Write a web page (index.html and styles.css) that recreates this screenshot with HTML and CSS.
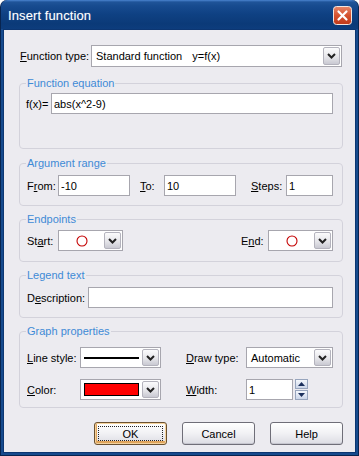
FILE: index.html
```html
<!DOCTYPE html>
<html lang="en">
<head>
<meta charset="UTF-8">
<title>Insert function</title>
<link rel="stylesheet" href="styles.css">
</head>
<body>
<div class="window">
  <div class="titlebar">
    <span class="title">Insert function</span>
    <span class="close">
      <svg width="19" height="19" viewBox="0 0 19 19"><defs><linearGradient id="cg" x1="0" y1="0" x2="0" y2="1"><stop offset="0" stop-color="#e8876a"/><stop offset="0.5" stop-color="#d5522f"/><stop offset="1" stop-color="#c0391a"/></linearGradient></defs><rect x="0.5" y="0.5" width="18" height="18" rx="3" fill="url(#cg)" stroke="#f3e6e0"/><path d="M5.5 5.5 L13.5 13.5 M13.5 5.5 L5.5 13.5" stroke="#fff" stroke-width="2.2" stroke-linecap="round"/></svg>
    </span>
  </div>
  <div class="client">
    <div class="row top-row">
      <span class="lbl lbl-type"><u>F</u>unction type:</span>
      <div class="combo combo-type">
        <div class="combo-val">Standard function<span class="sub">y=f(x)</span></div>
        <div class="combo-btn"><svg width="9" height="6" viewBox="0 0 9 6"><path d="M1 1 L4.5 4.5 L8 1" stroke="#222" stroke-width="2" fill="none"/></svg></div>
      </div>
    </div>

    <fieldset class="group g1">
      <legend>Function equation</legend>
      <div class="row">
        <span class="lbl lbl-fx">f(x)=</span>
        <input class="field grow" type="text" value="abs(x^2-9)">
      </div>
    </fieldset>

    <fieldset class="group g2">
      <legend>Argument range</legend>
      <div class="row">
        <span class="lbl lbl-from">F<u>r</u>om:</span>
        <input class="field w72" type="text" value="-10">
        <span class="lbl lbl-to"><u>T</u>o:</span>
        <input class="field w72" type="text" value="10">
        <span class="lbl lbl-steps"><u>S</u>teps:</span>
        <input class="field grow" type="text" value="1">
      </div>
    </fieldset>

    <fieldset class="group g3">
      <legend>Endpoints</legend>
      <div class="row">
        <span class="lbl lbl-from">St<u>a</u>rt:</span>
        <div class="combo combo-end">
          <div class="combo-val center"><svg width="12" height="12" viewBox="0 0 12 12"><circle cx="6" cy="6" r="5" fill="none" stroke="#c40000" stroke-width="1.1"/></svg></div>
          <div class="combo-btn"><svg width="9" height="6" viewBox="0 0 9 6"><path d="M1 1 L4.5 4.5 L8 1" stroke="#222" stroke-width="2" fill="none"/></svg></div>
        </div>
        <span class="lbl lbl-end">E<u>n</u>d:</span>
        <div class="combo combo-end">
          <div class="combo-val center"><svg width="12" height="12" viewBox="0 0 12 12"><circle cx="6" cy="6" r="5" fill="none" stroke="#c40000" stroke-width="1.1"/></svg></div>
          <div class="combo-btn"><svg width="9" height="6" viewBox="0 0 9 6"><path d="M1 1 L4.5 4.5 L8 1" stroke="#222" stroke-width="2" fill="none"/></svg></div>
        </div>
      </div>
    </fieldset>

    <fieldset class="group g4">
      <legend>Legend text</legend>
      <div class="row">
        <span class="lbl lbl-desc">D<u>e</u>scription:</span>
        <input class="field grow" type="text" value="">
      </div>
    </fieldset>

    <fieldset class="group g5">
      <legend>Graph properties</legend>
      <div class="row">
        <span class="lbl lbl-prop"><u>L</u>ine style:</span>
        <div class="combo combo-prop">
          <div class="combo-val pad"><div class="line-sample"></div></div>
          <div class="combo-btn"><svg width="9" height="6" viewBox="0 0 9 6"><path d="M1 1 L4.5 4.5 L8 1" stroke="#222" stroke-width="2" fill="none"/></svg></div>
        </div>
        <span class="lbl lbl-prop2"><u>D</u>raw type:</span>
        <div class="combo grow">
          <div class="combo-val">Automatic</div>
          <div class="combo-btn"><svg width="9" height="6" viewBox="0 0 9 6"><path d="M1 1 L4.5 4.5 L8 1" stroke="#222" stroke-width="2" fill="none"/></svg></div>
        </div>
      </div>
      <div class="row row-gap">
        <span class="lbl lbl-prop"><u>C</u>olor:</span>
        <div class="combo combo-prop">
          <div class="combo-val pad"><div class="color-sample"></div></div>
          <div class="combo-btn"><svg width="9" height="6" viewBox="0 0 9 6"><path d="M1 1 L4.5 4.5 L8 1" stroke="#222" stroke-width="2" fill="none"/></svg></div>
        </div>
        <span class="lbl lbl-prop2"><u>W</u>idth:</span>
        <input class="field w47" type="text" value="1">
        <div class="spin">
          <div class="spin-btn"><svg width="7" height="4" viewBox="0 0 7 4"><path d="M0 4 L3.5 0 L7 4 Z" fill="#1b2f5c"/></svg></div>
          <div class="spin-btn"><svg width="7" height="4" viewBox="0 0 7 4"><path d="M0 0 L3.5 4 L7 0 Z" fill="#1b2f5c"/></svg></div>
        </div>
      </div>
    </fieldset>

    <div class="buttons">
      <div class="btn default"><span class="focus">OK</span></div>
      <div class="btn">Cancel</div>
      <div class="btn">Help</div>
    </div>
  </div>
</div>
</body>
</html>
```

FILE: styles.css
```css
body{margin:0;background:#fff;font-family:"Liberation Sans",Arial,sans-serif;font-size:11px;color:#000}
.window{width:359px;height:456px;box-sizing:border-box;background:#164a8d;border:1px solid #08244f;border-top:none;border-radius:7px 7px 0 0;padding:0 2px 2px;overflow:hidden}
.titlebar{height:29px;margin:0 -2px;display:flex;align-items:center;justify-content:space-between;padding:0 6px 0 7px;border-radius:7px 7px 0 0;background:linear-gradient(#4a84cf 0,#1f5499 2px,#174b8f 6px,#0f4183 14px,#0b3a78 24px,#0d3d7d 29px)}
.title{color:#fff;font-size:13px;letter-spacing:0.1px;text-shadow:0 0 1px rgba(255,255,255,.35);margin-top:1px}
.close{display:flex;margin-top:1px}
.close svg{display:block}
.client{height:424px;box-sizing:border-box;background:#ecebf0;border:1px solid #0c3672;padding:15px 12px 0 15px}
.row{display:flex;align-items:center}
.row-gap{margin-top:11px}
.lbl{white-space:nowrap;flex:none}
u{text-decoration:underline;text-underline-offset:1px}
.lbl-type{width:71px;margin-left:1px}
.lbl-fx{width:24px;margin-left:-1px;margin-right:1px}
.lbl-from{width:31px}
.lbl-to{width:24px;margin-left:10px}
.lbl-steps{width:35px;margin-left:15px}
.lbl-end{width:27px;margin-left:auto}
.lbl-desc{width:61px}
.lbl-prop{width:53px}
.lbl-prop2{width:60px;margin-left:25px}
.grow{flex:1;min-width:0}
.w72{width:72px;flex:none}
.w47{width:47px;flex:none}

.field{height:21px;box-sizing:border-box;border:1px solid #a7a6ae;background:#fff;padding:0 2px;margin:0;font:11px "Liberation Sans",Arial,sans-serif;color:#000;outline:none}

.combo{height:21px;box-sizing:border-box;border:1px solid #a7a6ae;background:#fff;display:flex;padding:1px;flex:none}
.combo.grow{flex:1}
.combo-type{height:22px;width:251px}
.combo-end{width:65px}
.combo-prop{width:81px}
.combo-val{flex:1;display:flex;align-items:center;padding-left:3px;min-width:0;white-space:nowrap}
.combo-val.center{justify-content:center;padding-left:0}
.combo-val.pad{padding:2px 3px 2px 2px}
.combo-val .sub{margin-left:10px}
.combo-btn{width:17px;box-sizing:border-box;border:1px solid #b4b3bd;border-radius:2px;background:linear-gradient(#fbfbfc,#e6e6ea 55%,#c9c9d2);display:flex;align-items:center;justify-content:center}
.combo-btn svg{display:block}
.line-sample{flex:1;height:2px;background:#000}
.color-sample{flex:1;align-self:stretch;background:#f00;border:1px solid #000}

.spin{display:flex;flex-direction:column;gap:1px;margin-left:2px;height:21px}
.spin-btn{width:13px;height:10px;box-sizing:border-box;border:1px solid #98a5bd;background:linear-gradient(#f4f7fc,#cbd5e8);display:flex;align-items:center;justify-content:center}
.spin-btn svg{display:block}

.group{margin:7px 0 0;border:1px solid #d3d2db;border-radius:4px;padding:5px 9px 9px 7px;min-width:0}
.group legend{color:#3e8ad6;padding:0 1px;margin-left:-1px;line-height:13px;font-size:11px}
.g1{margin-top:10px;padding-top:3px;padding-bottom:34px}
.g2{margin-top:8px}
.g3{padding-top:4px;padding-bottom:10px}
.g5{padding-top:9px;padding-bottom:7px}

.buttons{display:flex;justify-content:flex-end;gap:15px;margin-top:14px}
.btn{width:73px;height:23px;box-sizing:border-box;border:1px solid #6f6e78;border-radius:3px;background:linear-gradient(#fff,#f1f1f4 50%,#dcdce3);display:flex;align-items:center;justify-content:center;box-shadow:inset 0 -1px 0 #c6c6cf}
.btn.default{border-color:#6a5030;box-shadow:inset 0 0 0 1px #f4d29c,inset 1px -2px 0 1px #e1a55c;padding:3px}
.focus{flex:1;align-self:stretch;display:flex;align-items:center;justify-content:center;border:1px dotted #222}
```
